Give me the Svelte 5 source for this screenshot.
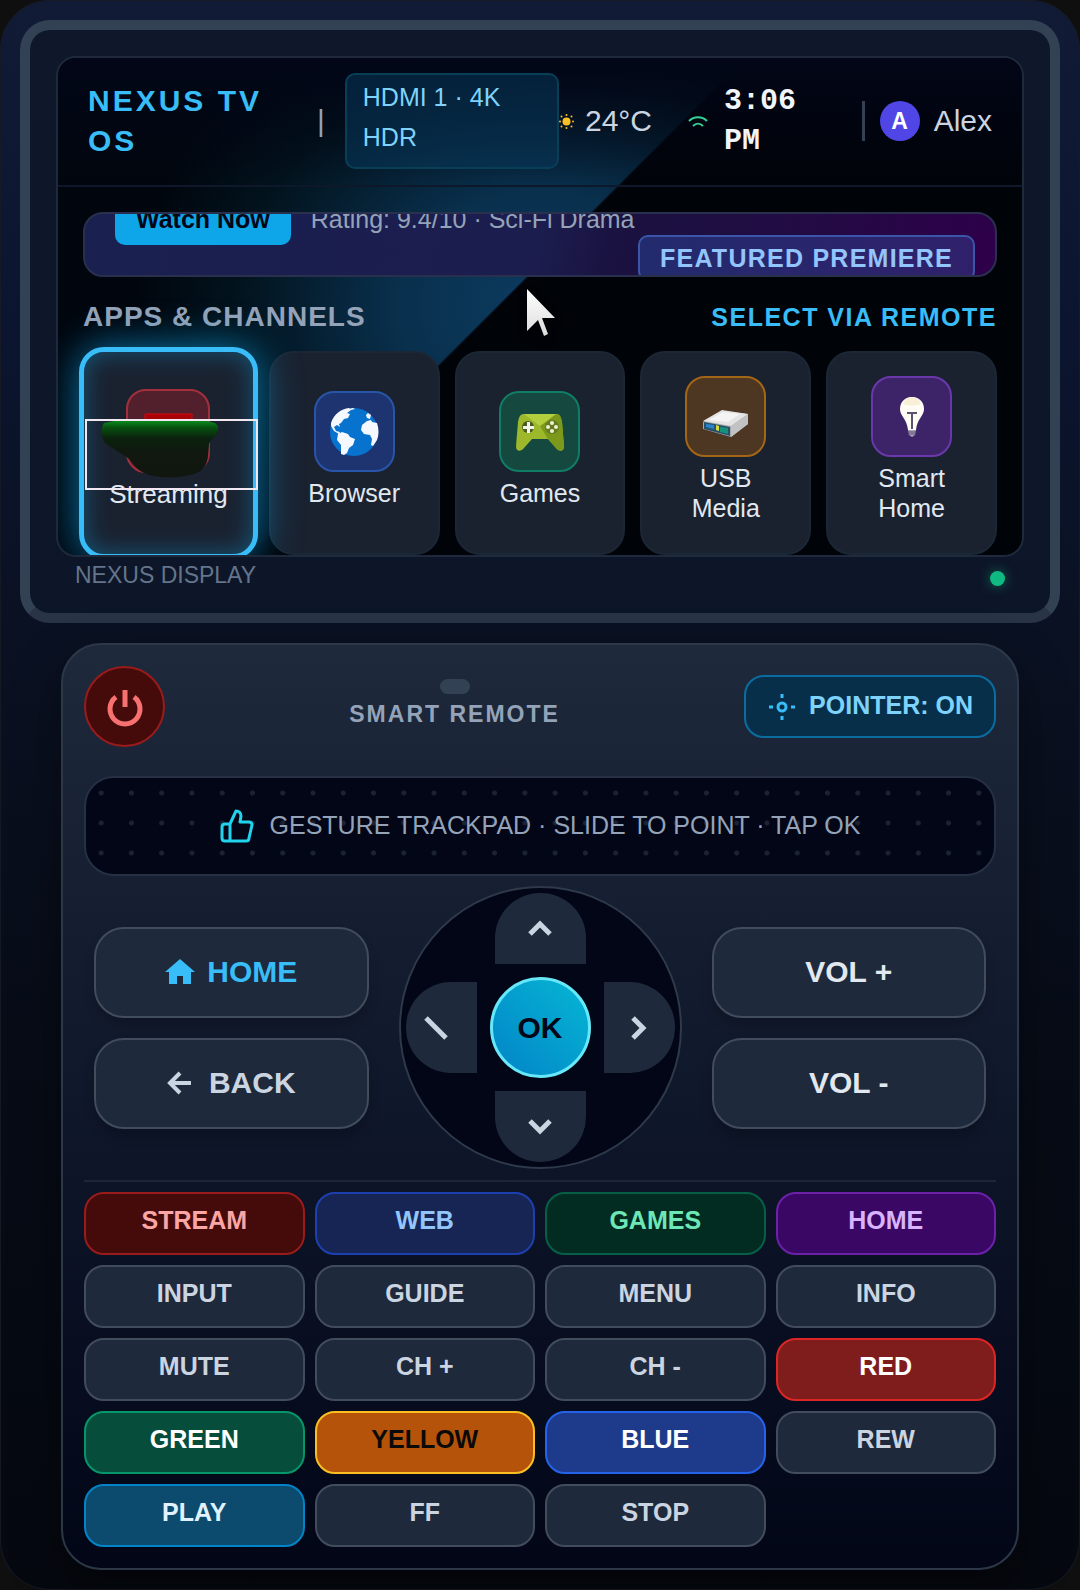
<script lang="ts">
  type Key = { label: string; tone?: string };

  const apps = [
    { id: "streaming", label: "Streaming" },
    { id: "browser", label: "Browser" },
    { id: "games", label: "Games" },
    { id: "usb", label: "USB Media" },
    { id: "smart", label: "Smart Home" },
  ];

  const keys: Key[] = [
    { label: "STREAM", tone: "stream" },
    { label: "WEB", tone: "web" },
    { label: "GAMES", tone: "games" },
    { label: "HOME", tone: "smart" },
    { label: "INPUT" },
    { label: "GUIDE" },
    { label: "MENU" },
    { label: "INFO" },
    { label: "MUTE" },
    { label: "CH +" },
    { label: "CH -" },
    { label: "RED", tone: "red" },
    { label: "GREEN", tone: "green" },
    { label: "YELLOW", tone: "yellow" },
    { label: "BLUE", tone: "blue" },
    { label: "REW" },
    { label: "PLAY", tone: "play" },
    { label: "FF" },
    { label: "STOP" },
  ];

  const arrows = [
    { dir: "up", path: "M5 20l10-10 10 10" },
    { dir: "left", path: "M5 5l20 20" },
    { dir: "right", path: "M9 5l10 10-10 10" },
    { dir: "down", path: "M5 9l10 10 10-10" },
  ];

  let selected = $state("streaming");
  let pointerOn = $state(true);
</script>

<main class="shell">
  <section class="tv">
    <div class="screen">
      <header class="status">
        <div class="status-left">
          <h1>NEXUS TV OS</h1>
          <span class="pipe">|</span>
          <span class="source">HDMI 1 · 4K HDR</span>
        </div>
        <div class="status-right">
          <svg class="sun" viewBox="0 0 30 30" width="15" height="15" fill="#fbbf24">
            <circle cx="15" cy="15" r="8" />
            <circle cx="15" cy="2" r="2" /><circle cx="15" cy="28" r="2" />
            <circle cx="2" cy="15" r="2" /><circle cx="28" cy="15" r="2" />
            <circle cx="5" cy="5" r="2" /><circle cx="25" cy="5" r="2" />
            <circle cx="5" cy="25" r="2" /><circle cx="25" cy="25" r="2" />
          </svg>
          <span class="temp">24°C</span>
          <svg class="wifi" viewBox="0 0 22 14" width="22" height="14" fill="none" stroke="#34d399" stroke-width="2">
            <path d="M2 7c5-5 13-5 18 0M6 12c3-3 7-3 10 0" />
          </svg>
          <time>3:06 PM</time>
          <div class="user">
            <span class="avatar">A</span>
            <span>Alex</span>
          </div>
        </div>
      </header>

      <div class="content">
        <div class="hero">
          <div class="hero-info">
            <button class="watch">Watch Now</button>
            <span>Rating: 9.4/10 · Sci-Fi Drama</span>
          </div>
          <span class="featured">FEATURED PREMIERE</span>
        </div>

        <div class="section-head">
          <h2>APPS &amp; CHANNELS</h2>
          <span>SELECT VIA REMOTE</span>
        </div>

        <div class="apps">
          {#each apps as app}
            <button class="app" class:selected={selected === app.id} onclick={() => (selected = app.id)}>
              <span class="tile {app.id}">
                {#if app.id === "browser"}
                  <svg viewBox="0 0 50 50" width="50" height="50">
                    <circle cx="25" cy="25" r="24" fill="#0872cf" />
                    <path fill="#f5f9ff" d="M2 16C5 7 12 2 20 1l2 2-4 3 3 1-2 4-4 1-3 4-2 1 1 3-3-2-3 2 2 4 4 1-1 2-5-3-3-5zM9 27l4-2 6 2 2 3 5 2-2 6-4 3-2 5-3 2-3-1 0-9-4-5zM19 2l5-1 2 1-4 1zM33 18l5-4 4-1 1 2 5 1c2 6 2 12 0 17l-4 6-2-1 1-6-2-4-6-1-3-4zM39 6l3 2-1 4-3-1-1-3z" />
                  </svg>
                {:else if app.id === "games"}
                  <svg viewBox="0 0 50 40" width="50" height="40">
                    <path d="M9 2h32c4 0 5 3 6 8l2 24c0 6-5 6-8 2L33 27H17L9 36c-3 4-8 4-8-2L3 10c1-5 2-8 6-8z" fill="#9db82b" />
                    <path d="M25 14L41 2c4 0 5 3 6 8l2 24c0 6-5 6-8 2l-8-9z" fill="#7d991c" />
                    <path d="M9 2h32L25 14z" fill="#b4cf3d" />
                    <circle cx="13" cy="15" r="6" fill="#4c5b24" />
                    <path d="M12 10h3v4h4v3h-4v4h-3v-4H8v-3h4z" fill="#f1f5e5" />
                    <circle cx="37" cy="15" r="7" fill="#667c1f" />
                    <g fill="#edf2d8">
                      <circle cx="37" cy="11" r="2" /><circle cx="37" cy="19" r="2" />
                      <circle cx="33" cy="15" r="2" /><circle cx="41" cy="15" r="2" />
                    </g>
                  </svg>
                {:else if app.id === "usb"}
                  <svg class="drive" viewBox="0 0 48 30" width="48" height="30">
                    <path d="M1 13L20 2l26 3v10L29 28 1 20z" fill="#a9a9ab" />
                    <path d="M1 12L20 1l26 4-17 12z" fill="#e4e4e4" />
                    <path d="M7 11l14-8 17 2-12 8z" fill="#f4f4f4" />
                    <path d="M29 17L46 5v10L29 28z" fill="#c2c2c4" />
                    <path d="M2 13l26 5v9L2 20z" fill="#25536c" />
                    <path d="M4 15l8 1v4l-8-2z" fill="#2a83cc" />
                    <path d="M14 16l3 1v5l-3-1z" fill="#d3dc45" />
                    <path d="M18 18l8 1v6l-8-2z" fill="#17917b" />
                  </svg>
                {:else if app.id === "smart"}
                  <svg viewBox="0 0 26 42" width="26" height="42">
                    <path d="M13 1C5 1 1 7 1 13c0 7 7 10 8 21h8c1-11 8-14 8-21 0-6-4-12-12-12z" fill="#fffdf6" />
                    <path d="M4 8c2-5 5-7 9-7s7 2 9 7c-5 2-13 2-18 0z" fill="#f8efd6" />
                    <path d="M8 17h10M13 17v16" stroke="#5b536b" stroke-width="2" fill="none" />
                    <path d="M9 34h8l-1 5-3 2-3-2z" fill="#aaa4b8" />
                    <path d="M9 36h8M9 38h7" stroke="#5c4d76" fill="none" />
                  </svg>
                {/if}
              </span>
              <span class="app-label">{app.label}</span>
              {#if app.id === "streaming"}
                <svg class="preview" viewBox="0 0 174 80" width="174" height="80">
                  <defs>
                    <linearGradient id="shade" x1="0" y1="0" x2="0" y2="1">
                      <stop offset="0" stop-color="#0a8a1c" />
                      <stop offset=".12" stop-color="#07500f" />
                      <stop offset=".3" stop-color="#0a220d" />
                      <stop offset=".55" stop-color="#10180f" />
                      <stop offset="1" stop-color="#11170f" />
                    </linearGradient>
                  </defs>
                  <path d="M61 3h47v6H61z" fill="#a90307" stroke="#dc0509" />
                  <path d="M20 12L30 10h93l8 2c3 2 4 5 3 8-2 5-7 8-9 13l-1 12c-1 10-6 16-14 18-10 3-20 4-30 3-10 0-18-2-25-7-5-4-7-8-10-11-4-4-10-6-15-10-5-3-11-6-12-13-1-5 0-10 2-13z" fill="url(#shade)" />
                  <rect x="2" y="9" width="171" height="69" fill="none" stroke="#f2e8f2" stroke-width="2" />
                </svg>
              {/if}
            </button>
          {/each}
        </div>
      </div>

      <svg class="cursor" viewBox="0 0 34 52" width="34" height="52">
        <defs>
          <linearGradient id="arrow" x1="0" y1="0" x2="0" y2="1">
            <stop offset="0" stop-color="#fff" />
            <stop offset="1" stop-color="#dcdcdc" />
          </linearGradient>
        </defs>
        <path d="M2 2v42l11-11 6 16 4-2-6-16h13z" fill="url(#arrow)" />
      </svg>
    </div>

    <footer>
      <span>NEXUS DISPLAY</span>
      <i class="led"></i>
    </footer>
  </section>

  <section class="remote">
    <div class="remote-head">
      <button class="power" aria-label="Power">
        <svg viewBox="0 0 40 40" width="40" height="40" fill="none" stroke="#f87171" stroke-width="5">
          <path d="M20 3v17M11 10a15 15 0 1 0 18 0" />
        </svg>
      </button>
      <div class="brand">
        <i></i>
        <span>SMART REMOTE</span>
      </div>
      <button class="pointer" onclick={() => (pointerOn = !pointerOn)}>
        <svg viewBox="0 0 26 26" width="26" height="26" fill="none" stroke="#38bdf8" stroke-width="3">
          <circle cx="13" cy="13" r="4" />
          <path d="M13 0v4M13 22v4M0 13h4M22 13h4" />
        </svg>
        <span>POINTER: {pointerOn ? "ON" : "OFF"}</span>
      </button>
    </div>

    <div class="trackpad">
      <svg viewBox="0 0 34 34" width="34" height="34" fill="none" stroke="#22d3ee" stroke-width="3" stroke-linejoin="round">
        <path d="M10 15l6-13c3 0 5 2 5 5l-1 6h9c2 0 3 1 3 3l-3 13c0 2-1 3-3 3H5c-2 0-3-1-3-3V18c0-2 1-3 3-3zM10 15v17" />
      </svg>
      <span>GESTURE TRACKPAD · SLIDE TO POINT · TAP OK</span>
    </div>

    <div class="nav">
      <div class="side">
        <button class="big home">
          <svg viewBox="0 0 30 26" width="30" height="26" fill="currentColor">
            <path d="M15 0l15 13h-4v12h-8v-8h-6v8H4V13H0z" />
          </svg>
          <span>HOME</span>
        </button>
        <button class="big back">
          <svg viewBox="0 0 24 24" width="24" height="24" fill="none" stroke="currentColor" stroke-width="4">
            <path d="M24 12H3M13 2L3 12l10 10" />
          </svg>
          <span>BACK</span>
        </button>
      </div>

      <div class="dpad">
        {#each arrows as arrow}
          <button class="dir {arrow.dir}" aria-label={arrow.dir}>
            <svg viewBox="0 0 30 30" width="30" height="30" fill="none" stroke="#cbd5e1" stroke-width="5">
              <path d={arrow.path} />
            </svg>
          </button>
        {/each}
        <button class="ok">OK</button>
      </div>

      <div class="side">
        <button class="big">VOL +</button>
        <button class="big">VOL -</button>
      </div>
    </div>

    <div class="keys">
      {#each keys as key}
        <button class="key {key.tone ?? ''}">{key.label}</button>
      {/each}
    </div>
  </section>
</main>

<style>
  :global(body) {
    margin: 0;
    background: #0f0f0f;
  }

  * {
    box-sizing: border-box;
  }

  button {
    font: inherit;
    margin: 0;
    padding: 0;
    cursor: pointer;
  }

  svg {
    flex: none;
  }

  .shell {
    min-height: 100vh;
    padding: 20px;
    border-radius: 50px;
    background: linear-gradient(#121b36 0, #0c1530 20%, #0a1122 40%, #070c17 65%, #05080f 100%);
    box-shadow: inset 0 0 1px 1px #171b25;
    font-family: "Liberation Sans", Arial, sans-serif;
    font-size: 25px;
    line-height: 30px;
    color: #cbd5e1;
  }

  .tv {
    padding: 26px 26px 23px;
    border: 10px solid #334155;
    border-bottom-color: #293547;
    border-radius: 30px;
    background: linear-gradient(#0e182a, #0d1628);
  }

  .screen {
    position: relative;
    overflow: hidden;
    border: 2px solid #1e293b;
    border-radius: 20px;
    background:
      linear-gradient(135deg, transparent 47%, #000308 calc(47% + 2px)),
      radial-gradient(ellipse 42% 65% at 50% 50%, #0c3b60 0, #09304d 35%, #02131d 75%, #01060e 100%);
  }

  .status {
    display: flex;
    align-items: center;
    padding: 15px 30px 16px;
    border-bottom: 2px solid #0f172a;
    background: linear-gradient(#020617, transparent);
    font-size: 30px;
    line-height: 40px;
  }

  .status-left {
    flex: 0 1 471px;
    display: flex;
    align-items: center;
    gap: 20px;
  }

  h1,
  h2 {
    margin: 0;
    font-weight: bold;
  }

  h1 {
    flex: 0 1 209px;
    font-size: 30px;
    letter-spacing: 3px;
    color: #38bdf8;
  }

  .pipe {
    color: #94a3b8;
  }

  .source {
    flex: 1;
    padding: 2px 16px 10px;
    border: 2px solid #083f56;
    border-radius: 10px;
    background: rgba(8, 60, 95, 0.5);
    font-size: 25px;
    color: #7dd3fc;
  }

  .status-right {
    flex: 1;
    display: flex;
    align-items: center;
  }

  .temp {
    margin: 0 35px 0 11px;
  }

  time {
    flex: 1 1 0;
    margin: 0 15px;
    font-family: "Liberation Mono", monospace;
    font-weight: bold;
    color: #f1f5f9;
  }

  .user {
    display: flex;
    align-items: center;
    gap: 14px;
    padding-left: 15px;
    border-left: 3px solid #334155;
  }

  .avatar {
    width: 40px;
    height: 40px;
    border-radius: 50%;
    background: #4f46e5;
    font-size: 23px;
    font-weight: bold;
    text-align: center;
    color: #fff;
  }

  .content {
    padding: 25px 25px 0;
  }

  .hero {
    display: flex;
    align-items: flex-start;
    justify-content: space-between;
    height: 65px;
    padding: 0 20px 0 30px;
    overflow: hidden;
    border: 2px solid #28304d;
    border-radius: 20px;
    background: linear-gradient(100deg, #1a2050 0, #1b1d4e 50%, #1a1240 58%, #230a44 80%, #2e004a 100%);
    white-space: nowrap;
  }

  .hero-info {
    display: flex;
    align-items: center;
    gap: 20px;
    margin-top: -21px;
    color: #94a3b8;
  }

  .watch {
    height: 52px;
    padding: 0 21px;
    border: 0;
    border-radius: 10px;
    background: #0ea5e9;
    font-weight: bold;
    color: #020617;
  }

  .featured {
    margin-top: 21px;
    padding: 6px 20px;
    border: 2px solid #3b55a8;
    border-radius: 10px;
    background: linear-gradient(90deg, #222b6d, #30206b);
    font-weight: bold;
    letter-spacing: 0.05em;
    color: #93c5fd;
  }

  .section-head {
    display: flex;
    align-items: center;
    justify-content: space-between;
    padding: 20px 0 14px;
    line-height: 40px;
    font-weight: bold;
  }

  h2 {
    font-size: 28px;
    letter-spacing: 1px;
    color: #94a3b8;
  }

  .section-head span {
    letter-spacing: 0.06em;
    color: #38bdf8;
  }

  .apps {
    display: grid;
    grid-template-columns: repeat(5, 1fr);
    gap: 15px;
    height: 204px;
  }

  .app {
    position: relative;
    display: flex;
    flex-direction: column;
    align-items: center;
    justify-content: center;
    gap: 6px;
    padding: 0 25px 7px;
    border: 2px solid #1c2735;
    border-radius: 25px;
    background: #1a2230;
    color: #e2e8f0;
  }

  .app.selected {
    margin: -4px;
    padding: 0 0 9px;
    border: 5px solid #38bdf8;
    box-shadow:
      0 0 40px rgba(14, 165, 233, 0.7),
      inset 0 0 25px rgba(14, 165, 233, 0.4);
    font-size: 26px;
    z-index: 1;
  }

  .tile {
    display: flex;
    align-items: center;
    justify-content: center;
    width: 81px;
    height: 81px;
    border: 2px solid;
    border-radius: 20px;
  }

  .selected .tile {
    width: 84px;
    height: 84px;
  }

  .streaming {
    border-color: #a42f3c;
    background: #52202c;
  }

  .browser {
    border-color: #2855a8;
    background: #1d3470;
  }

  .games {
    border-color: #107d65;
    background: #15483f;
  }

  .usb {
    border-color: #a36616;
    background: #4d3622;
  }

  .drive {
    margin-top: 14px;
  }

  .smart {
    border-color: #6b38ac;
    background: #3d2468;
  }

  /* clip preview that sits over the streaming tile */
  .preview {
    position: absolute;
    top: 59px;
    left: 0;
  }

  .cursor {
    position: absolute;
    top: 46%;
    left: 484px;
    left: calc(50% - 15px);
    z-index: 2;
    filter: drop-shadow(0 4px 4px rgba(0, 0, 0, 0.6));
  }

  footer {
    display: flex;
    align-items: center;
    justify-content: space-between;
    padding: 3px 19px 0;
    font-size: 23px;
    color: #64748b;
  }

  .led {
    width: 15px;
    height: 15px;
    margin-top: 6px;
    border-radius: 50%;
    background: #10b981;
    box-shadow: 0 0 12px rgba(16, 185, 129, 0.5);
  }

  .remote {
    margin: 20px 41px 0;
    padding: 21px;
    border: 2px solid #2c3748;
    border-radius: 40px;
    background: linear-gradient(#1e293b 0, #0f172a 50%, #020617 100%);
    box-shadow: 0 20px 50px rgba(0, 0, 0, 0.4);
  }

  .remote-head {
    display: flex;
    align-items: center;
    justify-content: space-between;
  }

  .power {
    display: flex;
    align-items: center;
    justify-content: center;
    width: 81px;
    height: 81px;
    border: 2px solid #991b1b;
    border-radius: 50%;
    background: #450a0a;
  }

  .brand {
    display: flex;
    flex-direction: column;
    align-items: center;
    gap: 5px;
    padding-bottom: 6px;
    font-size: 23px;
    font-weight: bold;
    letter-spacing: 2px;
    color: #94a3b8;
  }

  .brand i {
    width: 30px;
    height: 15px;
    border-radius: 8px;
    background: #334155;
  }

  .pointer {
    display: flex;
    align-items: center;
    gap: 14px;
    height: 63px;
    padding: 0 21px 0 23px;
    border: 2px solid #0b6c9f;
    border-radius: 20px;
    background: #082f49;
    font-weight: bold;
    color: #7dd3fc;
  }

  .pointer span {
    padding-bottom: 3px;
  }

  .trackpad {
    display: flex;
    align-items: center;
    justify-content: center;
    gap: 16px;
    height: 100px;
    margin-top: 29px;
    border: 2px solid #253044;
    border-radius: 30px;
    background: #020617 radial-gradient(circle, #1a2233 0, #1a2233 2px, transparent 3px) 0 0 / 30px 30px;
    background-repeat: round repeat;
    color: #94a3b8;
  }

  .trackpad span {
    padding-bottom: 3px;
  }

  .nav {
    display: grid;
    grid-template-columns: 1fr 283px 1fr;
    align-items: center;
    gap: 30px;
    padding: 10px 10px 11px;
    border-bottom: 2px solid #1b2536;
  }

  .side {
    display: grid;
    gap: 20px;
  }

  .big {
    display: flex;
    align-items: center;
    justify-content: center;
    gap: 12px;
    height: 91px;
    border: 2px solid #414c5d;
    border-radius: 30px;
    background: #1e293b;
    box-shadow: 0 8px 12px rgba(0, 0, 0, 0.2);
    font-size: 30px;
    font-weight: bold;
    color: #e2e8f0;
  }

  .home {
    color: #38bdf8;
  }

  .back {
    gap: 18px;
    color: #cbd5e1;
  }

  .dpad {
    display: grid;
    grid-template: 71px 1fr 71px / 71px 1fr 71px;
    place-items: center;
    height: 283px;
    padding: 5px;
    border: 2px solid #2e394a;
    border-radius: 50%;
    background: #020617;
  }

  .dir {
    display: flex;
    align-items: center;
    justify-content: center;
    width: 71px;
    height: 91px;
    border: 0;
    background: #1e293b;
  }

  .up,
  .down {
    width: 91px;
    height: 71px;
    grid-column: 2;
  }

  .up {
    grid-row: 1;
    border-radius: 45px 45px 0 0;
  }

  .down {
    grid-row: 3;
    border-radius: 0 0 45px 45px;
  }

  .left {
    grid-area: 2 / 1;
    padding-right: 10px;
    border-radius: 45px 0 0 45px;
  }

  .right {
    grid-area: 2 / 3;
    border-radius: 0 45px 45px 0;
  }

  .ok {
    grid-area: 2 / 2;
    width: 101px;
    height: 101px;
    border: 3px solid #67e8f9;
    border-radius: 50%;
    background: linear-gradient(45deg, #0284c7, #06b6d4);
    font-size: 30px;
    font-weight: bold;
    color: #020617;
  }

  .keys {
    display: grid;
    grid-template-columns: repeat(4, 1fr);
    gap: 10px;
    margin-top: 10px;
  }

  .key {
    height: 63px;
    padding-bottom: 7px;
    border: 2px solid #414c5d;
    border-radius: 20px;
    background: #1e293b;
    font-weight: bold;
    color: #cbd5e1;
  }

  .key.stream {
    border-color: #991b1b;
    background: #450a0a;
    color: #fca5a5;
  }

  .key.web {
    border-color: #1e40af;
    background: #172554;
    color: #93c5fd;
  }

  .key.games {
    border-color: #065f46;
    background: #022c22;
    color: #6ee7b7;
  }

  .key.smart {
    border-color: #6b21a8;
    background: #3b0764;
    color: #d8b4fe;
  }

  .key.red {
    border-color: #dc2626;
    background: #7f1d1d;
    color: #fff;
  }

  .key.green {
    border-color: #059669;
    background: #064e3b;
    color: #fff;
  }

  .key.yellow {
    border-color: #fbbf24;
    background: #b45309;
    color: #0a0a0a;
  }

  .key.blue {
    border-color: #2563eb;
    background: #1e3a8a;
    color: #fff;
  }

  .key.play {
    border-color: #0284c7;
    background: #0c4a6e;
    color: #e0f2fe;
  }
</style>
